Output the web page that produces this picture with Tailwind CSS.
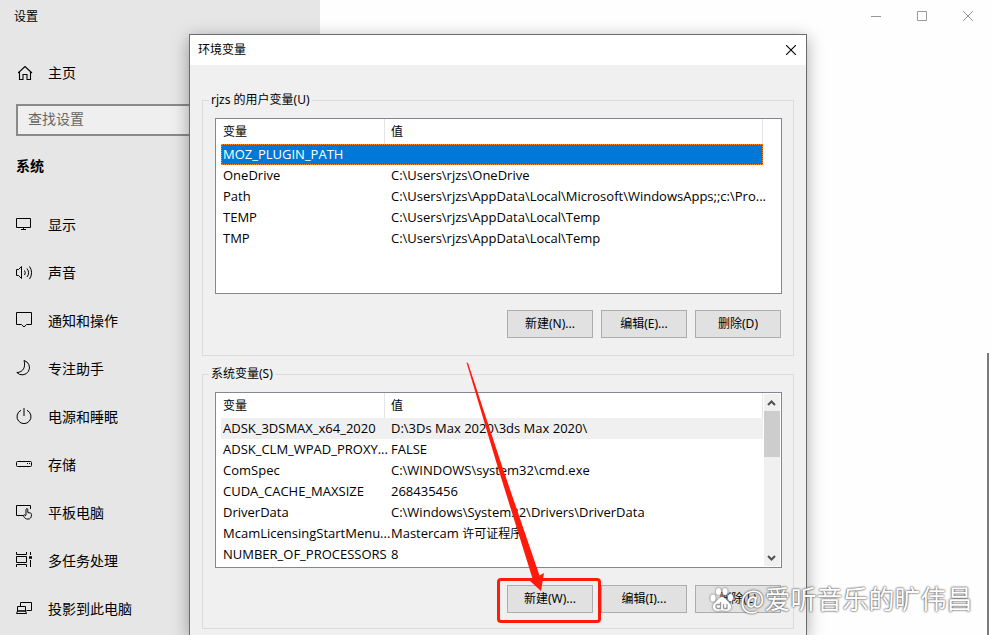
<!DOCTYPE html>
<html lang="zh-CN">
<head>
<meta charset="utf-8">
<title>设置</title>
<script src="https://cdn.jsdelivr.net/npm/@tailwindcss/browser@4"></script>
</head>
<body class="relative flex h-screen overflow-hidden bg-[#fefefe] font-['Noto_Sans','Noto_Sans_CJK_SC',sans-serif] text-xs text-black">

<aside class="flex w-80 shrink-0 flex-col bg-[#e6e6e6] text-sm">
  <h1 class="px-3.5 pt-[9px] text-xs leading-4">设置</h1>
  <a href="#" class="mt-6 flex h-12 items-center gap-3.5 pl-4.5 leading-5">
    <svg class="size-4" viewBox="0 0 16 16" fill="none" stroke="#000" stroke-width="1.1"><path d="M0 8 7 1.500 14 8M1.500 7v7.500H5V9.500h4v5h3.500V7"/></svg>
    主页
  </a>
  <div class="mt-[7px] px-4">
    <input type="text" aria-label="查找设置" placeholder="查找设置" class="h-8 w-full border-2 border-[#8a8a8a] bg-[#efefef] px-2.5 pb-[3px] text-sm leading-5 outline-none placeholder:text-[#666]">
  </div>
  <h2 class="mt-5 px-4 leading-5 font-bold">系统</h2>
  <nav class="mt-[25px] flex flex-col">
    <a href="#" class="flex h-12 items-center gap-3.5 pl-4"><svg class="size-4.5" viewBox="0 0 18 18" fill="none" stroke="#000"><path d="M.5 2.500h14v9H.5zM7.500 11.500v2M5 13.500h5"/></svg>显示</a>
    <a href="#" class="flex h-12 items-center gap-3.5 pl-4"><svg class="size-4.5" viewBox="0 0 18 18" fill="none" stroke="#000"><path d="M.5 5.500H2.500L5.500 2.500v12L2.500 11.500H.5z"/><path d="M8.500 6.500a4 4 0 0 1 0 4.500M11 4.500a7 7 0 0 1 0 8.500M13.500 2.500a10.500 10.500 0 0 1 0 12.500"/></svg>声音</a>
    <a href="#" class="flex h-12 items-center gap-3.5 pl-4"><svg class="size-4.5" viewBox="0 0 18 18" fill="none" stroke="#000"><path d="M.5.5h15v12H10.500L8 15 5.500 12.500H.5z"/></svg>通知和操作</a>
    <a href="#" class="flex h-12 items-center gap-3.5 pl-4"><svg class="size-4.5" viewBox="0 0 18 18" fill="none" stroke="#000"><path d="M8 .5A7.300 7.300 0 1 1 .8 12.500C7 12.500 10 7 8 .5z"/></svg>专注助手</a>
    <a href="#" class="flex h-12 items-center gap-3.5 pl-4"><svg class="size-4.5" viewBox="0 0 18 18" fill="none" stroke="#000"><path d="M5 2.300a7 7 0 1 0 6 0M8 0v8"/></svg>电源和睡眠</a>
    <a href="#" class="flex h-12 items-center gap-3.5 pl-4"><svg class="size-4.5" viewBox="0 0 18 18" fill="none" stroke="#000"><rect x=".5" y="5.500" width="15" height="5" rx="1"/><path d="M11 7.500h1M13 7.500h1"/></svg>存储</a>
    <a href="#" class="flex h-12 items-center gap-3.5 pl-4"><svg class="size-4.5" viewBox="0 0 18 18" fill="none" stroke="#000"><path d="M7 11.500H.5v-10h14V5"/><path d="M10 11V5.500c0-1.300 1.800-1.300 1.800 0V8.500l2.700.6c1 .3 1.200 1 1 2-.2 2.500-1.200 4-3.500 4S8.500 14 7.500 12c-.4-1 .8-1.600 1.500-.9l1 .9"/></svg>平板电脑</a>
    <a href="#" class="flex h-12 items-center gap-3.5 pl-4"><svg class="size-4.5" viewBox="0 0 18 18" fill="none" stroke="#000"><path d="M.5 0v2.500h10V0M.5 4.500h10v6H.5zM.5 15v-2.500h10V15M14.500 0v3M14.500 8v7"/><path d="M13 5.500h3" stroke-width="2.500"/></svg>多任务处理</a>
    <a href="#" class="flex h-12 items-center gap-3.5 pl-4"><svg class="size-4.5" viewBox="0 0 18 18" fill="none" stroke="#000"><path d="M4.500 6V2.500h11v8h-5M1.500 6.500h8v4.500h-8zM.5 13.500h10L9.500 11h-8z"/></svg>投影到此电脑</a>
  </nav>
</aside>

<main class="flex min-w-0 flex-1 flex-col items-end">
  <div class="flex h-8 items-center gap-9 pr-4.5">
    <button type="button" aria-label="最小化"><svg class="size-2.5" viewBox="0 0 10 10" stroke="#999"><path d="M0 5.500h10"/></svg></button>
    <button type="button" aria-label="最大化"><svg class="size-2.5" viewBox="0 0 10 10" fill="none" stroke="#999"><path d="M.5.5h9v9h-9z"/></svg></button>
    <button type="button" aria-label="关闭"><svg class="size-2.5" viewBox="0 0 10 10" stroke="#999"><path d="M0 0l10 10M10 0 0 10"/></svg></button>
  </div>
  <div class="mt-[321px] mr-0.5 w-0.5 flex-1 bg-[#7b7b7b]"></div>
</main>

<section role="dialog" aria-labelledby="dlg-title" class="absolute top-[34px] bottom-0 left-[189px] w-[618px] border border-b-0 border-[#6b6b6b] bg-[#f0f0f0] shadow-[0_4px_16px_rgba(0,0,0,0.35)]">
  <header class="flex h-[30px] items-center justify-between bg-white pr-2.5 pb-px pl-2">
    <h2 id="dlg-title" class="leading-4">环境变量</h2>
    <button type="button" aria-label="关闭"><svg class="size-2.5" viewBox="0 0 10 10" stroke="#000" stroke-width="1.1"><path d="M0 0l10 10M10 0 0 10"/></svg></button>
  </header>
  <div class="flex flex-col gap-2.5 px-3 pt-[27px]">
    <fieldset class="border border-[#dcdcdc] pr-[11px] pb-[17px] pl-3">
      <legend class="-ml-1.5 px-0.5 leading-4">rjzs 的用户变量(U)</legend>
      <div class="mt-2.5 h-44 border border-[#828790] bg-white pr-[18px] pl-[5px]">
        <table class="w-full table-fixed border-separate border-spacing-0 text-left font-['Open_Sans','Noto_Sans_CJK_SC',sans-serif] text-[13px] leading-[21px] whitespace-nowrap">
          <thead class="text-xs"><tr class="h-[25px]"><th class="w-[164px] border-r border-[#e5e5e5] pl-0.5 font-normal">变量</th><th class="border-r border-[#e5e5e5] pl-1.5 font-normal">值</th></tr></thead>
          <tbody>
            <tr class="bg-[#0078d7] text-white outline-1 -outline-offset-1 outline-dotted outline-[#ff8728]"><td class="pl-0.5">MOZ_PLUGIN_PATH</td><td class="pl-1.5"></td></tr>
            <tr><td class="pl-0.5">OneDrive</td><td class="pl-1.5">C:\Users\rjzs\OneDrive</td></tr>
            <tr><td class="pl-0.5">Path</td><td class="pl-1.5">C:\Users\rjzs\AppData\Local\Microsoft\WindowsApps;;c:\Pro...</td></tr>
            <tr><td class="pl-0.5">TEMP</td><td class="pl-1.5">C:\Users\rjzs\AppData\Local\Temp</td></tr>
            <tr><td class="pl-0.5">TMP</td><td class="pl-1.5">C:\Users\rjzs\AppData\Local\Temp</td></tr>
          </tbody>
        </table>
      </div>
      <div class="mt-4 flex justify-end gap-2 pr-px">
        <button type="button" class="h-7 w-[86px] border border-[#adadad] bg-[#e1e1e1]">新建(N)...</button>
        <button type="button" class="h-7 w-[86px] border border-[#adadad] bg-[#e1e1e1]">编辑(E)...</button>
        <button type="button" class="h-7 w-[86px] border border-[#adadad] bg-[#e1e1e1]">删除(D)</button>
      </div>
    </fieldset>
    <fieldset class="border border-[#dcdcdc] pr-[11px] pb-[15px] pl-3">
      <legend class="-ml-1.5 px-0.5 leading-4">系统变量(S)</legend>
      <div class="mt-2.5 flex h-44 border border-[#828790] bg-white pl-[5px]">
        <div class="min-w-0 flex-1">
          <table class="w-full table-fixed border-separate border-spacing-0 text-left font-['Open_Sans','Noto_Sans_CJK_SC',sans-serif] text-[13px] leading-[21px] whitespace-nowrap">
            <thead class="text-xs"><tr class="h-[25px]"><th class="w-[164px] border-r border-[#e5e5e5] pl-0.5 font-normal">变量</th><th class="border-r border-[#e5e5e5] pl-1.5 font-normal">值</th></tr></thead>
            <tbody>
              <tr class="bg-[#f0f0f0]"><td class="pl-0.5">ADSK_3DSMAX_x64_2020</td><td class="pl-1.5">D:\3Ds Max 2020\3ds Max 2020\</td></tr>
              <tr><td class="pl-0.5">ADSK_CLM_WPAD_PROXY...</td><td class="pl-1.5">FALSE</td></tr>
              <tr><td class="pl-0.5">ComSpec</td><td class="pl-1.5">C:\WINDOWS\system32\cmd.exe</td></tr>
              <tr><td class="pl-0.5">CUDA_CACHE_MAXSIZE</td><td class="pl-1.5">268435456</td></tr>
              <tr><td class="pl-0.5">DriverData</td><td class="pl-1.5">C:\Windows\System32\Drivers\DriverData</td></tr>
              <tr><td class="pl-0.5">McamLicensingStartMenu...</td><td class="pl-1.5">Mastercam <span class="text-xs leading-4">许可证程序</span></td></tr>
              <tr><td class="pl-0.5">NUMBER_OF_PROCESSORS</td><td class="pl-1.5">8</td></tr>
            </tbody>
          </table>
        </div>
        <div class="my-px mr-px ml-px flex w-4 flex-col items-center bg-[#f0f0f0]">
          <svg class="h-[17px] w-4 shrink-0" viewBox="0 0 16 17" fill="none" stroke="#505050" stroke-width="2"><path d="M4 11 7.500 7.500 11 11"/></svg>
          <div class="h-[46px] w-full bg-[#cdcdcd]"></div>
          <svg class="mt-auto h-[17px] w-4 shrink-0" viewBox="0 0 16 17" fill="none" stroke="#505050" stroke-width="2"><path d="M4 7 7.500 10.500 11 7"/></svg>
        </div>
      </div>
      <div class="mt-[17px] flex justify-end gap-2 pr-px">
        <button type="button" class="h-7 w-[86px] border border-[#adadad] bg-[#e1e1e1]">新建(W)...</button>
        <button type="button" class="h-7 w-[86px] border border-[#adadad] bg-[#e1e1e1]">编辑(I)...</button>
        <button type="button" class="h-7 w-[86px] border border-[#adadad] bg-[#e1e1e1]">删除(L)</button>
      </div>
    </fieldset>
  </div>
</section>

<div class="pointer-events-none absolute top-[578px] left-[497px] h-[45px] w-[104px] rounded-sm border-3 border-[#ff1a0a]"></div>
<svg class="pointer-events-none absolute top-[360px] left-[460px] h-[240px] w-[90px]" viewBox="460 360 90 240" fill="#ff1a0a"><path d="M466.500 362.500 468 363 501 463 539.500 575.500 544 573 541 591 530 581 532.500 578.500 496.500 463z"/></svg>

<div class="pointer-events-none absolute top-[582px] left-[710px] flex items-center gap-0.5 font-['Noto_Sans_CJK_SC',sans-serif] text-[26px] leading-8 whitespace-nowrap text-white">
  <svg class="size-7 overflow-visible drop-shadow-[0_0_1px_#555]" viewBox="0 0 28 28" fill="#fff"><ellipse cx="3" cy="14" rx="2.600" ry="3.600"/><ellipse cx="8.500" cy="7.500" rx="2.600" ry="3.600"/><ellipse cx="15" cy="7.500" rx="2.600" ry="3.600"/><ellipse cx="20.500" cy="13.500" rx="2.600" ry="3.600"/><path d="M12 13c3 0 4 2.500 6 4.500 3 2.500 4 5 2.500 7.500-2 3-5.500 1.500-8.500 1.500S5.500 28 3.500 25C2 22.500 3 20 6 17.500 8.500 15.500 9 13 12 13z"/><path d="M10.500 18v6.500H8a1.800 1.800 0 0 1 0-4h2.500M13.500 20v3.500q0 1 1 1h2.500V20" fill="none" stroke="#999" stroke-width="1.300"/></svg>
  <span class="text-shadow-[0_0_2px_#444,0_0_2px_#777]">@爱听音乐的旷伟昌</span>
</div>
</body>
</html>
